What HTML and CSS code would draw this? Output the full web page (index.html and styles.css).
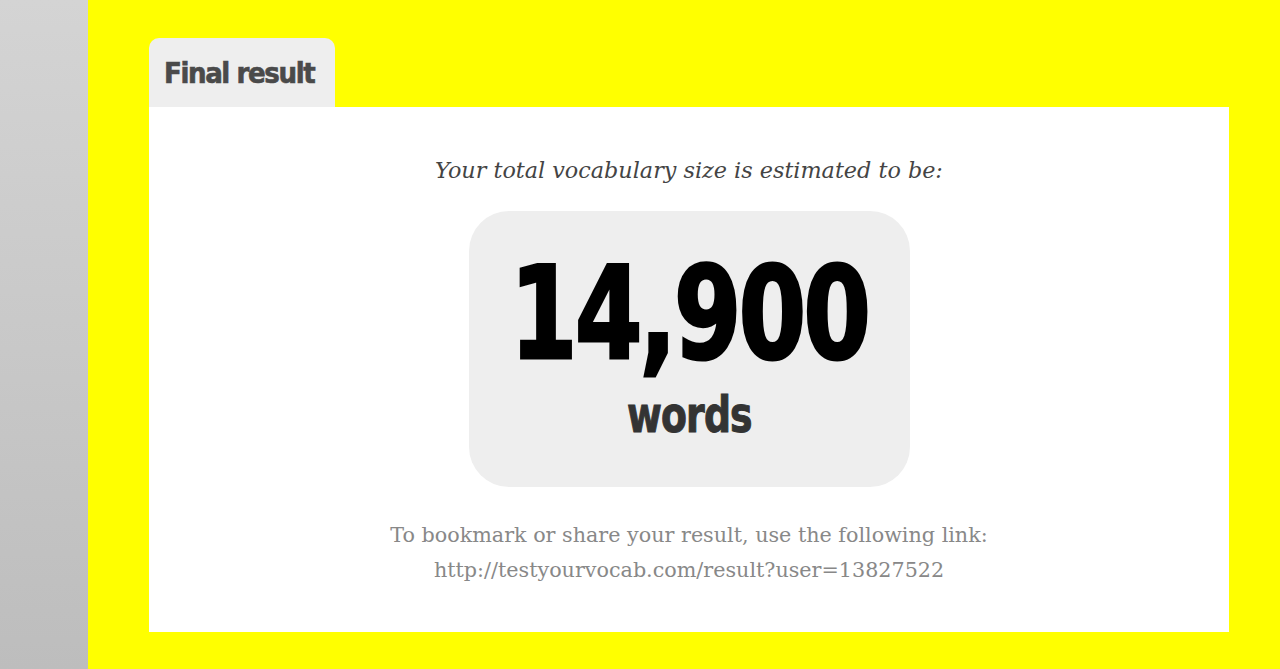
FILE: index.html
```html
<!DOCTYPE html>
<html lang="en">
<head>
  <meta charset="UTF-8">
  <meta name="viewport" content="width=device-width, initial-scale=1.0">
  <title>Test Your Vocab - Final result</title>

  <link rel="stylesheet" href="styles.css">
</head>
<body>
  <div class="lateral"></div>

  <main class="conteudo">
    <div class="aba">Final result</div>

    <section class="resultado">
      <p class="estimativa">Your total vocabulary size is estimated to be:</p>

      <div class="placar">
        <span class="numero">14,900</span>
        <span class="palavras">words</span>
      </div>

      <p class="compartilhar">
        To bookmark or share your result, use the following link:<br>
        http://testyourvocab.com/result?user=13827522
      </p>
    </section>
  </main>
</body>
</html>
```

FILE: styles.css
```css
body {
  margin: 0;
  height: 669px;
  display: flex;
  overflow: hidden;
}

.lateral {
  width: 88px;
  background: linear-gradient(#d4d4d4, #bdbdbd);
}

.conteudo {
  flex: 1;
  background: #ffff00;
  padding: 38px 51px 37px 61px;
  display: flex;
  flex-direction: column;
}

.aba {
  width: 186px;
  height: 69px;
  box-sizing: border-box;
  padding: 18px 0 0 15px;
  background: #eeeeee;
  border-radius: 10px 10px 0 0;
  color: #4a4a4a;
  font-family: "DejaVu Sans Condensed", "DejaVu Sans", sans-serif;
  font-stretch: condensed;
  font-weight: bold;
  font-size: 29px;
  line-height: 34px;
  letter-spacing: -1.4px;
  -webkit-text-stroke: 0.6px #4a4a4a;
}

.resultado {
  flex: 1;
  background: #ffffff;
  display: flex;
  flex-direction: column;
  align-items: center;
  padding-top: 48px;
}

.estimativa {
  margin: 0;
  color: #444444;
  font-family: "DejaVu Serif", Georgia, serif;
  font-style: italic;
  font-size: 22.3px;
  line-height: 30px;
}

.placar {
  margin-top: 26px;
  width: 441px;
  height: 276px;
  background: #eeeeee;
  border-radius: 40px;
  display: flex;
  flex-direction: column;
  align-items: center;
  font-family: "DejaVu Sans Condensed", "DejaVu Sans", sans-serif;
  font-stretch: condensed;
  font-weight: bold;
}

.numero {
  margin-top: 48px;
  color: #000000;
  font-size: 128px;
  line-height: 110px;
  letter-spacing: -3px;
  transform: scaleX(0.84);
  -webkit-text-stroke: 3px #000000;
}

.palavras {
  margin-top: 18px;
  color: #333333;
  font-size: 50px;
  line-height: 56px;
  letter-spacing: -1px;
  transform: scaleX(0.84);
  -webkit-text-stroke: 1px #333333;
}

.compartilhar {
  margin: 31px 0 0;
  color: #888888;
  text-align: center;
  font-family: "DejaVu Serif", Georgia, serif;
  font-size: 20.7px;
  line-height: 35px;
}
```
